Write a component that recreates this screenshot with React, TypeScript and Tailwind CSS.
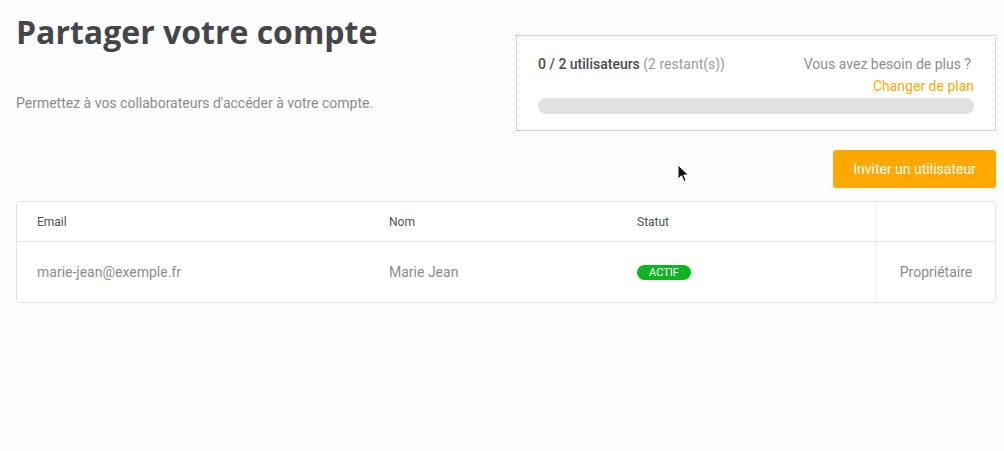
export default function App() {
  return (
    <div className="relative min-h-[451px] w-[1004px] bg-[#fdfdfd] pl-4 pr-2 font-['Roboto',sans-serif]">
      <div className="flex items-start justify-between">
        <div className="pt-[10px]">
          <h1 className="font-['Open_Sans',sans-serif] text-[32px] font-bold leading-[44px] text-[#45464b]">
            Partager votre compte
          </h1>
          <p className="mt-[39px] text-[14px] text-[#8b8b8f]">
            Permettez à vos collaborateurs d'accéder à votre compte.
          </p>
        </div>
        <div className="mt-[35px] w-[480px] border border-dotted border-[#b4b4b4] bg-white px-[21px] pb-4 pt-[18px]">
          <div className="flex items-start justify-between">
            <div className="text-[14px] leading-5">
              <span className="font-medium text-[#4a4a50]">0 / 2 utilisateurs</span>{" "}
              <span className="text-[#9a9a9e]">(2 restant(s))</span>
            </div>
            <div className="flex flex-col items-end text-[14px] leading-5">
              <span className="pr-[3px] text-[#8d8d91]">Vous avez besoin de plus ?</span>
              <a className="mt-[2px] text-[#ffa800]">Changer de plan</a>
            </div>
          </div>
          <div className="mt-[2px] h-4 rounded-full bg-[#e1e1e5]" />
        </div>
      </div>

      <div className="mt-[19px] flex justify-end">
        <button className="h-[38px] w-[163px] rounded-[3px] bg-[#ffa800] text-[14px] text-white">
          Inviter un utilisateur
        </button>
      </div>

      <div className="mt-[13px] overflow-hidden rounded-[3px] border border-[#e3e3e6] bg-white">
        <div className="grid h-[40px] grid-cols-[351px_248px_260px_1fr] border-b border-[#e3e3e6] text-[12px] text-[#4f5055]">
          <div className="flex items-center pl-5">Email</div>
          <div className="flex items-center pl-[21px]">Nom</div>
          <div className="flex items-center pl-[21px]">Statut</div>
          <div className="border-l border-[#ececee]" />
        </div>
        <div className="grid h-[60px] grid-cols-[351px_248px_260px_1fr] text-[14px] text-[#8b8b8f]">
          <div className="flex items-center pl-5">marie-jean@exemple.fr</div>
          <div className="flex items-center pl-[21px]">Marie Jean</div>
          <div className="flex items-center pl-[21px]">
            <span className="flex h-[15px] w-[54px] items-center justify-center rounded-full bg-[#0fb520] text-[11px] leading-none text-white">
              ACTIF
            </span>
          </div>
          <div className="flex items-center justify-center border-l border-[#ececee]">Propriétaire</div>
        </div>
      </div>

      <svg
        className="absolute left-[677px] top-[164px]"
        width="14"
        height="20"
        viewBox="0 0 14 20"
      >
        <path d="M1 1 L1 15 L4.5 11.8 L7 17.5 L9.2 16.5 L6.8 11 L11.5 11 Z" fill="#111" stroke="#fff" strokeWidth="1" />
      </svg>
    </div>
  );
}
